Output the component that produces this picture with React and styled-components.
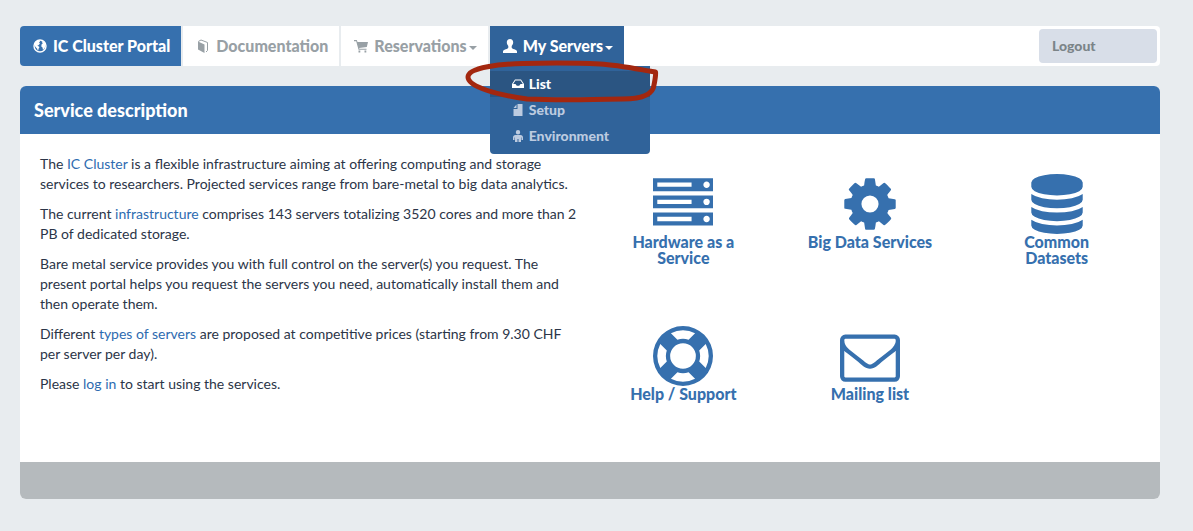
import React from "react";
import styled, { createGlobalStyle, css } from "styled-components";

const blue = "#3670ae";
const darkBlue = "#30639a";
const deepBlue = "#2b5582";

const GlobalStyle = createGlobalStyle`
  * { box-sizing: border-box; }
  body {
    margin: 0;
    background: #e8ecef;
    color: #2b3548;
    font-family: Lato, "Liberation Sans", sans-serif;
    font-size: 14px;
    line-height: 20px;
  }
`;

const Page = styled.div`
  padding: 26px 33px 32px 20px;
`;

const NavBar = styled.nav`
  display: flex;
  height: 40px;
  margin-bottom: 20px;
  background: #fff;
  border-radius: 4px;
`;

const NavList = styled.ul`
  display: flex;
  gap: 2px;
  flex: 1;
  margin: 0;
  padding: 0;
  list-style: none;
`;

const NavItem = styled.li`
  position: relative;
  display: flex;
  box-shadow: 2px 0 0 #e8ecef;
  &:last-child { box-shadow: none; }
`;

const navEntry = css`
  display: flex;
  align-items: center;
  padding: 0 11px 0 13px;
  border: 0;
  font: 900 16px/20px Lato, "Liberation Sans", sans-serif;
  color: ${(p) => (p.$tone ? "#fff" : "#98a0a5")};
  background: ${(p) => p.$tone || "#fff"};
  text-decoration: none;
  white-space: nowrap;
  cursor: pointer;
`;

const NavLink = styled.a`
  ${navEntry}
  border-radius: ${(p) => (p.$first ? "4px 0 0 4px" : "0")};
`;

const NavButton = styled.button`
  ${navEntry}
`;

const Glyph = styled.svg`
  flex: none;
  width: ${(p) => p.$size}px;
  height: ${(p) => p.$size}px;
  margin-right: ${(p) => (p.$size > 12 ? 6 : 5)}px;
  fill: currentColor;
`;

const Caret = styled.span`
  margin: 4px 0 0 2px;
  border: 4px solid transparent;
  border-top-color: currentColor;
  border-bottom: 0;
`;

const Menu = styled.ul`
  position: absolute;
  z-index: 2;
  top: 100%;
  left: 0;
  width: 160px;
  margin: 0;
  padding: 5px 0;
  list-style: none;
  background: ${darkBlue};
  border-radius: 0 0 4px 4px;
`;

const MenuLink = styled.a`
  display: flex;
  align-items: center;
  height: 26px;
  padding: 0 22px;
  font-weight: 900;
  text-decoration: none;
  color: ${(p) => (p.$current ? "#fff" : "#bccbe0")};
  background: ${(p) => (p.$current ? deepBlue : "transparent")};
`;

const Marker = styled.svg`
  position: absolute;
  z-index: 3;
  top: 30px;
  left: -30px;
  width: 204px;
  height: 52px;
  fill: none;
  stroke: #a3270f;
  stroke-width: 5;
  stroke-linejoin: round;
  pointer-events: none;
`;

const Logout = styled.button`
  width: 118px;
  margin: 3px;
  padding: 0 13px;
  border: 0;
  border-radius: 4px;
  background: #d8dee8;
  color: #7b8488;
  font: 900 14px/20px Lato, "Liberation Sans", sans-serif;
  text-align: left;
  cursor: pointer;
`;

const Panel = styled.main`
  overflow: hidden;
  border-radius: 6px;
  background: #fff;
`;

const PanelTitle = styled.h1`
  margin: 0;
  padding: 14px;
  background: ${blue};
  color: #fff;
  font-size: 18px;
  font-weight: 900;
  line-height: 20px;
`;

const PanelBody = styled.div`
  display: grid;
  grid-template-columns: 1fr 1fr;
  padding: 0 10px;
`;

const Description = styled.section`
  padding: 20px 10px;
`;

const Paragraph = styled.p`
  margin: 0 0 10px;
`;

const TextLink = styled.a`
  color: #2e6bb0;
  text-decoration: none;
`;

const Services = styled.section`
  display: grid;
  grid-template-columns: repeat(3, 1fr);
  align-content: start;
  padding-top: 40px;
`;

const ServiceLink = styled.a`
  display: flex;
  flex-direction: column;
  align-items: center;
  min-height: 76px;
  margin-bottom: 60px;
  padding: 0 30px;
  color: ${blue};
  font-size: 16px;
  font-weight: 900;
  line-height: 16px;
  text-align: center;
  text-decoration: none;
`;

const ServiceIcon = styled.svg`
  width: 60px;
  height: 60px;
  fill: currentColor;
`;

const PanelFooter = styled.footer`
  height: 37px;
  background: #b5babd;
`;

const icons = {
  server:
    "M128 1408h1024v-128h-1024v128zm0-512h1024v-128h-1024v128zm1568 448q0-40-28-68t-68-28-68 28-28 68 28 68 68 28 68-28 28-68zm-1568-960h1024v-128h-1024v128zm1568 448q0-40-28-68t-68-28-68 28-28 68 28 68 68 28 68-28 28-68zm0-512q0-40-28-68t-68-28-68 28-28 68 28 68 68 28 68-28 28-68zm96 832v384h-1792v-384h1792zm0-512v384h-1792v-384h1792zm0-512v384h-1792v-384h1792z",
  cog: "M1152 896q0-106-75-181t-181-75-181 75-75 181 75 181 181 75 181-75 75-181zm512-109v222q0 12-8 23t-20 13l-185 28q-19 54-39 91 35 50 107 138 10 12 10 25t-9 23q-27 37-99 108t-94 71q-12 0-26-9l-138-108q-44 23-91 38-16 136-29 186-7 28-36 28h-222q-14 0-24.5-8.5t-11.5-21.5l-28-184q-49-16-90-37l-141 107q-10 9-25 9-14 0-25-11-126-114-165-168-7-10-7-23 0-12 8-23 15-21 51-66.5t54-70.5q-27-50-41-99l-183-27q-13-2-21-12.5t-8-23.5v-222q0-12 8-23t19-13l186-28q14-46 39-92-40-57-107-138-10-12-10-24 0-10 9-23 26-36 98.5-107.5t94.5-71.5q13 0 26 10l138 107q44-23 91-38 16-136 29-186 7-28 36-28h222q14 0 24.5 8.5t11.5 21.5l28 184q49 16 90 37l142-107q9-9 24-9 13 0 25 10 129 119 165 170 7 8 7 22 0 12-8 23-15 21-51 66.5t-54 70.5q26 50 41 98l183 28q13 2 21 12.5t8 23.5z",
  database:
    "M896 768q237 0 443-43t325-127v170q0 69-103 128t-280 93.5-385 34.5-385-34.5-280-93.5-103-128v-170q119 84 325 127t443 43zm0 768q237 0 443-43t325-127v170q0 69-103 128t-280 93.5-385 34.5-385-34.5-280-93.5-103-128v-170q119 84 325 127t443 43zm0-384q237 0 443-43t325-127v170q0 69-103 128t-280 93.5-385 34.5-385-34.5-280-93.5-103-128v-170q119 84 325 127t443 43zm0-1152q208 0 385 34.5t280 93.5 103 128v128q0 69-103 128t-280 93.5-385 34.5-385-34.5-280-93.5-103-128v-128q0-69 103-128t280-93.5 385-34.5z",
  ring: "M896 0q182 0 348 71t286 191 191 286 71 348-71 348-191 286-286 191-348 71-348-71-286-191-191-286-71-348 71-348 191-286 286-191 348-71zm0 128q-190 0-361 90l194 194q82-28 167-28t167 28l194-194q-171-90-361-90zm-678 1129l194-194q-28-82-28-167t28-167l-194-194q-90 171-90 361t90 361zm678 407q190 0 361-90l-194-194q-82 28-167 28t-167-28l-194 194q171 90 361 90zm0-384q159 0 271.5-112.5t112.5-271.5-112.5-271.5-271.5-112.5-271.5 112.5-112.5 271.5 112.5 271.5 271.5 112.5zm484-217l194 194q90-171 90-361t-90-361l-194 194q28 82 28 167t-28 167z",
  envelope:
    "M1664 1504v-768q-32 36-69 66-268 206-426 338-51 43-83 67t-86.5 48.5-102.5 24.5h-2q-48 0-102.5-24.5t-86.5-48.5-83-67q-158-132-426-338-37-30-69-66v768q0 13 9.5 22.5t22.5 9.5h1472q13 0 22.5-9.5t9.5-22.5zm0-1051v-24.5l-.5-13-3-12.5-5.5-9-9-7.5-14-2.5h-1472q-13 0-22.5 9.5t-9.5 22.5q0 168 147 284 193 152 401 317 6 5 35 29.5t46 37.5 44.5 31.5 50.5 27.5 43 9h2q20 0 43-9t50.5-27.5 44.5-31.5 46-37.5 35-29.5q208-165 401-317 54-43 100.5-115.5t46.5-131.5zm128-37v1088q0 66-47 113t-113 47h-1472q-66 0-113-47t-47-113v-1088q0-66 47-113t113-47h1472q66 0 113 47t47 113z",
};

const services = [
  ["Hardware as a Service", "server"],
  ["Big Data Services", "cog"],
  ["Common Datasets", "database"],
  ["Help / Support", "ring"],
  ["Mailing list", "envelope"],
];

const glyphs = {
  globe: (
    <>
      <circle cx="7" cy="7" r="6" fill="none" stroke="currentColor" strokeWidth="1.400" />
      <path d="M1 5L3.500 2l3-.8.5 1.300-1 1.200 1 .8L5.500 6.200 4.300 6.500 6.500 8 5.700 9.500 5 12 4 9.500 2.500 8zM8.500 1.800l3.500 1.900.5 2.800-.8 2.500L10 11 9.500 8.500 8.300 7.500 8.500 5.500l1.200-1z" />
    </>
  ),
  book: (
    <>
      <path d="M2 2.500L8.500 5.500V14L2 10.500z" />
      <path d="M2.300 2.500L5 1l6.500 2.500V11.500L10 13" fill="none" stroke="currentColor" strokeWidth="1" />
    </>
  ),
  cart: (
    <path d="M0 1h2.800l.7 2H14L12.800 8 5.200 8.900l.2.900H12.500v1H4.500L2.200 2.200H0zM4.500 11.500h1.800v2H4.500zM10.500 11.500h1.800v2h-1.800z" />
  ),
  user: (
    <path d="M7 0c2 0 3.200 1.300 3.200 3.200 0 1.800-.9 3-1.500 3.700v1.600c0 .8 1 1.200 2.600 1.800 1.700.6 2.700 1.200 2.700 2.200V14H0v-1.500c0-1 1-1.600 2.700-2.200 1.600-.6 2.600-1 2.600-1.800V6.900C4.700 6.200 3.800 5 3.800 3.200 3.800 1.300 5 0 7 0z" />
  ),
  inbox: (
    <path d="M3 1.500h6l3 4.500V10H0V6zM3.400 2.500L1.200 6.100H3.500L4.800 7.800H7.200L8.500 6.100h2.300L8.600 2.500z" fillRule="evenodd" />
  ),
  file: <path d="M5.500 0H10.500V12H1.500V5H5.500zM4.500.4V4H1.500z" />,
  person: (
    <path d="M6 0a2 2 0 1 1 0 4.400A2 2 0 0 1 6 0zM3.500 5h5C10 5 11 6.200 11 7.500V10H9.500V7.500H9V12H6.500V9h-1v3H3V7.500h-.5V10H1V7.500C1 6.200 2 5 3.500 5z" />
  ),
};

function NavGlyph({ name, size = 14 }) {
  return (
    <Glyph $size={size} viewBox={`0 0 ${size} ${size}`} aria-hidden="true">
      {glyphs[name]}
    </Glyph>
  );
}

export default function App() {
  return (
    <>
      <GlobalStyle />
      <Page>
        <NavBar aria-label="Main">
          <NavList>
            <NavItem>
              <NavLink href="#home" $tone={blue} $first>
                <NavGlyph name="globe" />
                IC Cluster Portal
              </NavLink>
            </NavItem>
            <NavItem>
              <NavLink href="#docs">
                <NavGlyph name="book" />
                Documentation
              </NavLink>
            </NavItem>
            <NavItem>
              <NavButton type="button" aria-haspopup="true">
                <NavGlyph name="cart" />
                Reservations
                <Caret />
              </NavButton>
            </NavItem>
            <NavItem>
              <NavButton type="button" $tone={darkBlue} aria-haspopup="true" aria-expanded="true">
                <NavGlyph name="user" />
                My Servers
                <Caret />
              </NavButton>
              <Menu>
                <li>
                  <MenuLink href="#list" $current>
                    <NavGlyph name="inbox" size={12} />
                    List
                  </MenuLink>
                </li>
                <li>
                  <MenuLink href="#setup">
                    <NavGlyph name="file" size={12} />
                    Setup
                  </MenuLink>
                </li>
                <li>
                  <MenuLink href="#environment">
                    <NavGlyph name="person" size={12} />
                    Environment
                  </MenuLink>
                </li>
              </Menu>
              <Marker viewBox="0 0 204 52" aria-hidden="true">
                <path d="M195 16C177 13 158 9 140 8C118 7 85 7 63 7.500C42 8 8 11 8 21C8 31 38 39 67 43C90 44 140 43.500 163 43C184 43 193 38 194 29C195 24 196 19 195.500 16L189 15" />
              </Marker>
            </NavItem>
          </NavList>
          <Logout type="button">Logout</Logout>
        </NavBar>

        <Panel>
          <PanelTitle>Service description</PanelTitle>
          <PanelBody>
            <Description>
              <Paragraph>
                The <TextLink href="#cluster">IC Cluster</TextLink> is a flexible infrastructure
                aiming at offering computing and storage services to researchers. Projected
                services range from bare-metal to big data analytics.
              </Paragraph>
              <Paragraph>
                The current <TextLink href="#infrastructure">infrastructure</TextLink> comprises
                143 servers totalizing 3520 cores and more than 2 PB of dedicated storage.
              </Paragraph>
              <Paragraph>
                Bare metal service provides you with full control on the server(s) you request.
                The present portal helps you request the servers you need, automatically install
                them and then operate them.
              </Paragraph>
              <Paragraph>
                Different <TextLink href="#types">types of servers</TextLink> are proposed at
                competitive prices (starting from 9.30 CHF per server per day).
              </Paragraph>
              <Paragraph>
                Please <TextLink href="#login">log in</TextLink> to start using the services.
              </Paragraph>
            </Description>
            <Services>
              {services.map(([label, icon]) => (
                <ServiceLink href={`#${icon}`} key={icon}>
                  <ServiceIcon viewBox="0 0 1792 1792" aria-hidden="true">
                    <path d={icons[icon]} />
                  </ServiceIcon>
                  {label}
                </ServiceLink>
              ))}
            </Services>
          </PanelBody>
          <PanelFooter />
        </Panel>
      </Page>
    </>
  );
}
